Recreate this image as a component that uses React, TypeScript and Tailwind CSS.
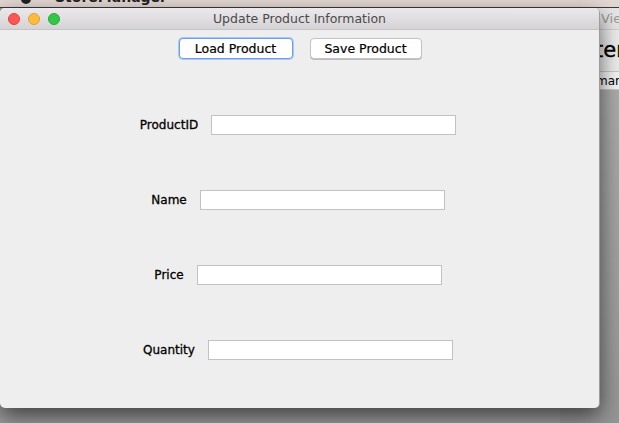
import React from "react";

const font = { fontFamily: '"DejaVu Sans", "Liberation Sans", sans-serif' };

function Field({ label }: { label: string }) {
  return (
    <div className="flex items-center justify-center gap-[13px]">
      <span className="text-[12px] text-black leading-none [-webkit-text-stroke:0.3px_#000]">{label}</span>
      <div className="w-[245px] h-[20px] bg-white border border-[#c2c2c2]" />
    </div>
  );
}

export default function App() {
  return (
    <div className="relative w-[619px] h-[423px] overflow-hidden bg-[#9c9c9c]" style={font}>
      {/* menu bar */}
      <div className="absolute left-0 top-0 w-[619px] h-[8px] bg-[#e3d7d3] border-b border-[#3a3a3a] overflow-hidden">
        <div className="absolute left-[21px] top-[-7px] w-[10px] h-[11px] rounded-full bg-[#222]" />
        <span className="absolute left-[55px] top-[-10px] text-[14px] font-bold text-[#222] leading-none">StoreManager</span>
      </div>

      {/* background window on the right */}
      <div className="absolute left-[560px] top-[8px] w-[200px] h-[415px] bg-gradient-to-b from-[#b0b0b0] to-[#959595]">
        <div className="h-[22px] bg-[#e6e6e6] border-b border-[#cfcfcf] flex items-center pl-[41px]">
          <span className="text-[13px] text-[#9a9a9a]">View</span>
        </div>
        <div className="h-[41px] bg-[#ececec] flex items-center pl-[35px]">
          <span className="text-[21px] text-black leading-none [-webkit-text-stroke:0.4px_#000]">ter</span>
        </div>
        <div className="h-[19px] bg-[#f4f4f4] border-y border-[#c8c8c8] flex items-center pl-[36px]">
          <span className="text-[12px] text-black leading-none">mary</span>
        </div>
      </div>

      {/* main window */}
      <div className="absolute left-0 top-[8px] w-[600px] h-[400px] bg-[#eeeeee] rounded-[5px] overflow-hidden shadow-[0_8px_22px_rgba(0,0,0,0.6)] border-r border-[#9c9c9c]">
        <div className="relative h-[22px] bg-gradient-to-b from-[#ebe9eb] to-[#d5d3d5] border-b border-[#c4c4c4] flex items-center justify-center pt-[2px]">
          <div className="absolute left-[8px] top-[5px] flex gap-[8px]">
            <div className="w-[12px] h-[12px] rounded-full bg-[#fc5753] border border-[#de3f3b]" />
            <div className="w-[12px] h-[12px] rounded-full bg-[#fdbc40] border border-[#de9f2a]" />
            <div className="w-[12px] h-[12px] rounded-full bg-[#33c748] border border-[#27aa35]" />
          </div>
          <span className="text-[12.5px] text-[#4a4a4a] leading-none">Update Product Information</span>
        </div>

        <div className="flex flex-col">
          <div className="flex justify-center gap-[17px] pt-[8px] pl-[1px]">
            <div className="w-[114px] h-[21px] rounded-[4px] bg-white border border-[#6f9ee6] shadow-[0_0_0_1px_#a9c8f3] flex items-center justify-center pt-[1px] text-[12.5px] text-black [-webkit-text-stroke:0.2px_#000]">
              Load Product
            </div>
            <div className="w-[112px] h-[21px] rounded-[4px] bg-white border border-[#c3c3c3] shadow-[0_1px_0_#bdbdbd] flex items-center justify-center pt-[1px] text-[12.5px] text-black [-webkit-text-stroke:0.2px_#000]">
              Save Product
            </div>
          </div>
          <div className="flex flex-col gap-[55px] pt-[56px] pr-[3px]">
            <Field label="ProductID" />
            <Field label="Name" />
            <Field label="Price" />
            <Field label="Quantity" />
          </div>
        </div>
      </div>
    </div>
  );
}
